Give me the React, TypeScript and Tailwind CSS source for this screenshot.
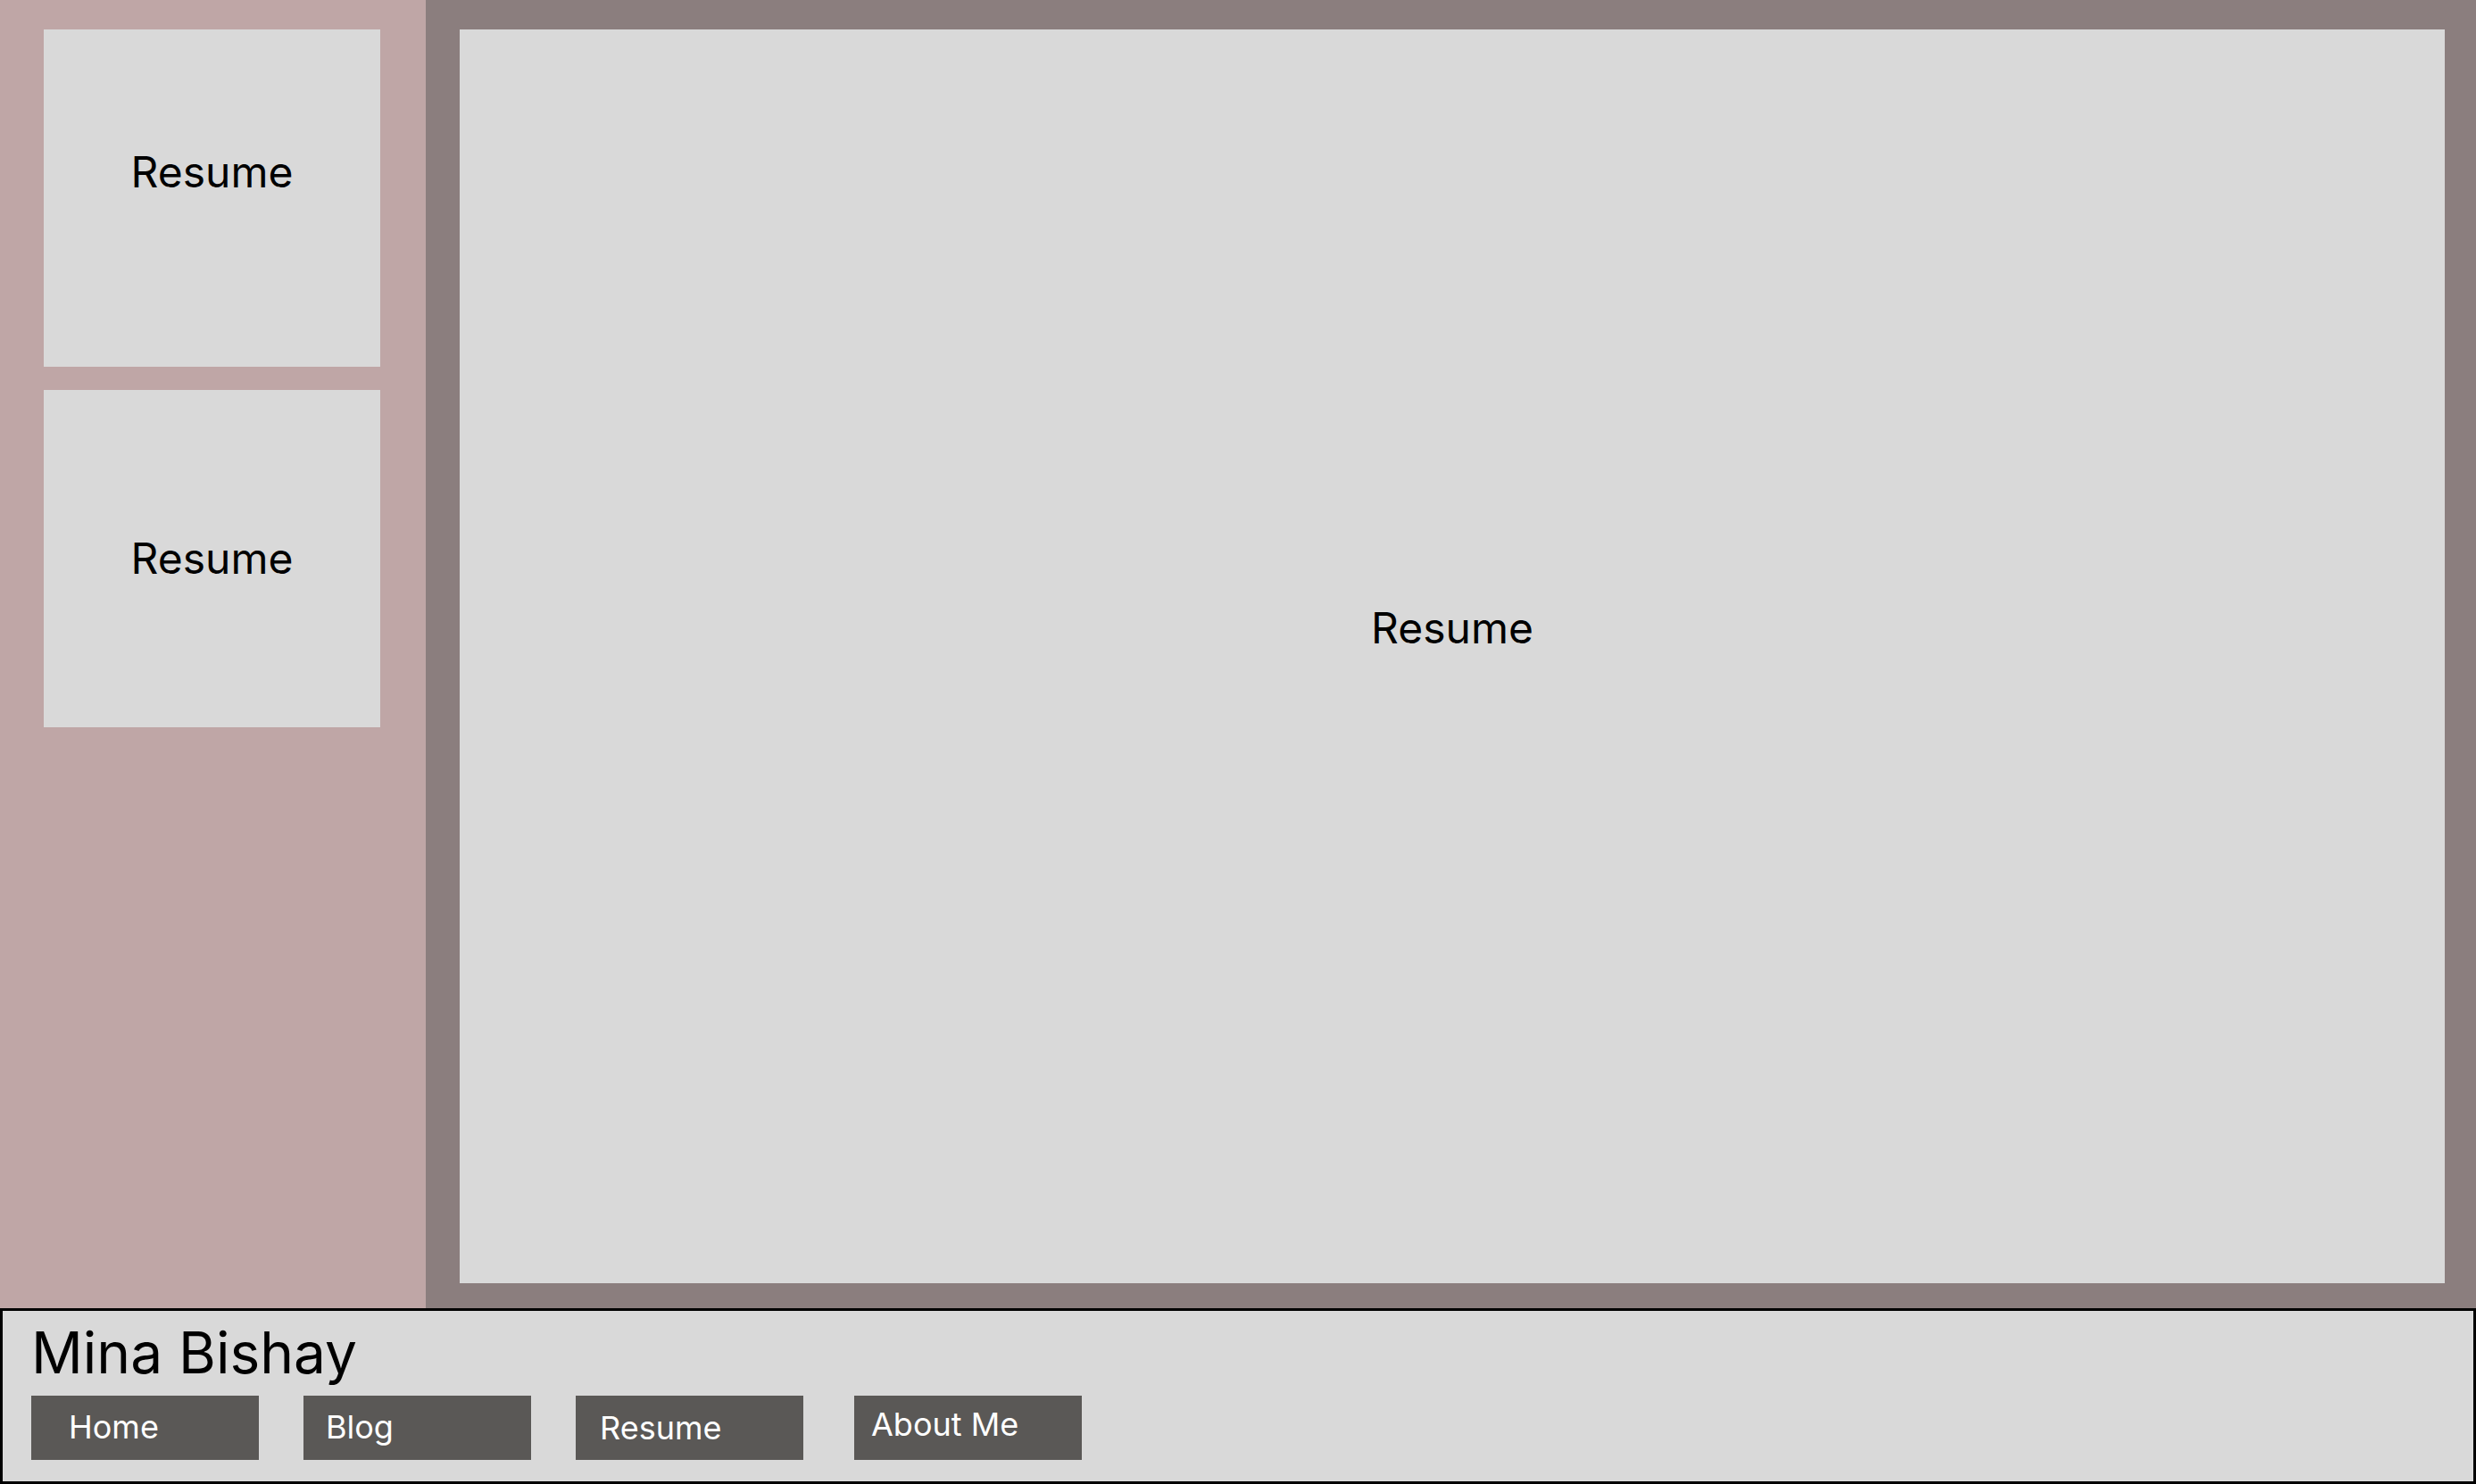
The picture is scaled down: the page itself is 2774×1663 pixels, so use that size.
export default function App() {
    return (
        <div className="flex flex-col w-full h-[1663px] font-['Inter',sans-serif] text-black">
            {/* top area: sidebar + main viewer */}
            <div className="flex h-[1466px]">
                <div className="w-[477px] shrink-0 bg-[#bfa6a6] pt-[33px] pl-[49px] flex flex-col gap-[26px]">
                    <div className="w-[377px] h-[378px] bg-[#d9d9d9] flex items-center justify-center pb-[58px]">
                        <span className="text-[48px] leading-none">Resume</span>
                    </div>
                    <div className="w-[377px] h-[378px] bg-[#d9d9d9] flex items-center justify-center">
                        <span className="text-[48px] leading-none">Resume</span>
                    </div>
                </div>
                <div className="flex-1 flex bg-[#8b7e7e] pt-[33px] pl-[38px] pr-[35px] pb-[28px]">
                    <div className="flex-1 bg-[#d9d9d9] flex items-center justify-center pb-[64px]">
                        <span className="text-[48px] leading-none">Resume</span>
                    </div>
                </div>
            </div>

            {/* footer nav */}
            <div className="h-[197px] border-[3px] border-black bg-[#d9d9d9] pl-[32px] pt-[15px]">
                <h1 className="text-[64px] leading-none">Mina Bishay</h1>
                <div className="flex mt-[16px] text-white text-[36px] leading-none">
                    <div className="w-[255px] h-[72px] bg-[#5a5856] flex items-center pl-[42px] pb-[3px]">Home</div>
                    <div className="w-[255px] h-[72px] bg-[#5a5856] flex items-center pl-[25px] pb-[3px] ml-[50px]">Blog</div>
                    <div className="w-[255px] h-[72px] bg-[#5a5856] flex items-center pl-[27px] ml-[50px]">Resume</div>
                    <div className="w-[255px] h-[72px] bg-[#5a5856] flex items-center pl-[19px] pb-[8px] ml-[57px]">About Me</div>
                </div>
            </div>
        </div>
    );
}
